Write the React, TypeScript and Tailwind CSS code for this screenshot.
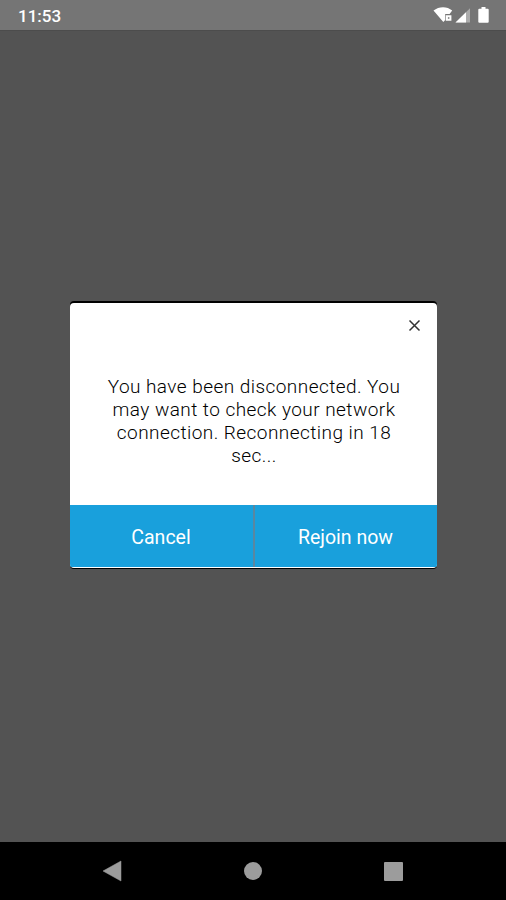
import React from 'react';

const StatusBar: React.FC = () => {
    return (
        <header className="flex h-[30px] w-full shrink-0 items-center justify-between bg-[#757575] pl-[18px] pr-[15px] text-white">
            <span className="pt-0.5 text-[17px] leading-5 font-medium">11:53</span>
            <svg width="58" height="20" viewBox="0 0 58 20" fill="currentColor" aria-hidden="true">
                <path d="M0.5 5.6C6 1 14.2 1 19.2 5.6L16.6 9H12.2V15L10.3 17Z" />
                <path fillRule="evenodd" d="M12.8 10.2h5.6v5.6h-5.6ZM14.9 12.3v1.5h1.5v-1.5Z" />
                <path d="M22.5 17.5 37 3.2V17.5Z" className="opacity-40" />
                <path d="M22.5 17.5 33 7.2V17.5Z" />
                <path d="M48.5 2h4v1.8h2.2q1 0 1 1v12q0 1-1 1h-8.4q-1 0-1-1v-12q0-1 1-1h2.2Z" />
            </svg>
        </header>
    );
};

const DisconnectedDialog: React.FC = () => {
    return (
        <section
            role="dialog"
            className="flex h-[265px] w-[367px] flex-col overflow-hidden rounded-[4px] bg-white shadow-[0_-2px_0_0_#000,0_1px_0_0_#000]"
        >
            <div className="flex justify-end pt-4 pr-4">
                <button aria-label="Close" className="text-[#333333]">
                    <svg width="13" height="13" viewBox="0 0 13 13" fill="none" stroke="currentColor" strokeWidth="1.5">
                        <path d="M1.5 1.5 11.5 11.5M11.5 1.5 1.5 11.5" />
                    </svg>
                </button>
            </div>
            <p className="grow pr-[26px] pl-[28px] pt-[43px] text-center text-[19px] leading-[23px] font-light tracking-[0.45px] text-black">
                You have been disconnected. You may want to check your network connection. Reconnecting in 18 sec...
            </p>
            <div className="mb-px flex h-[62px] shrink-0 bg-[#19a0dc] text-[19.5px] text-white">
                <button className="w-[183px] shrink-0 pt-[3px]">Cancel</button>
                <span className="w-0.5 shrink-0 bg-[#5a87a0]" />
                <button className="grow pt-[3px]">Rejoin now</button>
            </div>
        </section>
    );
};

const NavigationBar: React.FC = () => {
    return (
        <nav className="flex h-[58px] w-full shrink-0 items-center justify-between bg-black pr-[103px] pl-[102px] text-[#9c9c9c]">
            <svg width="20" height="22" viewBox="0 0 20 22" fill="currentColor">
                <path d="M1 11 19 1V21Z" stroke="currentColor" strokeWidth="0.5" strokeLinejoin="round" />
            </svg>
            <span className="size-[18px] rounded-full bg-current" />
            <span className="size-[19px] rounded-[1px] bg-current" />
        </nav>
    );
};

const App: React.FC = () => {
    return (
        <div className="flex h-[900px] w-[506px] flex-col overflow-hidden bg-[#535353] font-['Roboto',sans-serif]">
            <StatusBar />
            <main className="flex grow justify-center border-t border-[#4c4c4c] pt-[272px]">
                <DisconnectedDialog />
            </main>
            <NavigationBar />
        </div>
    );
};

export default App;
